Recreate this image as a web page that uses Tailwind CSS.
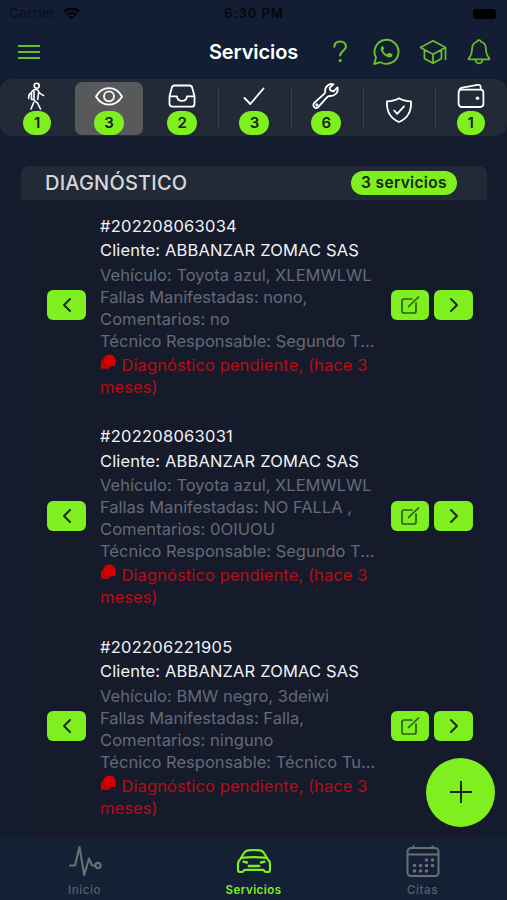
<!DOCTYPE html>
<html lang="es">
<head>
<meta charset="utf-8">
<title>Servicios</title>
<script src="https://cdn.jsdelivr.net/npm/@tailwindcss/browser@4"></script>
</head>
<body class="w-[507px] h-[900px] overflow-hidden bg-[#131c2c] font-[Inter,sans-serif]">
<div class="relative flex flex-col w-[507px] h-[900px] overflow-hidden">
  <header class="h-[79px] shrink-0 bg-[#131d33]">
    <div class="relative h-[27px] flex items-center justify-between pl-[9px] pr-[11px] text-[13px] text-[#04070e]">
      <div class="flex items-center gap-[7px] text-[#080d18]"><span class="tracking-[0.600px]">Carrier</span>
        <svg class="w-[17px] h-[13px]" viewBox="0 0 18 13" fill="none" stroke="#02040a" stroke-width="2.6"><path d="M1 4.800C5.500.500 12.500.500 17 4.800M4 8c3-2.700 7-2.700 10 0"/><path d="M9 12.500 6.200 9.800c1.600-1.400 4-1.400 5.600 0z" fill="#02040a" stroke="none"/></svg>
      </div>
      <span class="absolute left-0 w-full text-center font-semibold tracking-[0.900px] pl-[1px]">6:30 PM</span>
      <span class="w-[23px] h-[10px] rounded-[3px] bg-black"></span>
    </div>
    <div class="relative h-[50px] flex items-center justify-between pl-[18px] pr-[14px] text-[#6abf2e]">
      <svg class="w-[22px] h-[14px]" viewBox="0 0 22 14" stroke="currentColor" stroke-width="1.800"><path d="M0 1h22M0 7h22M0 13h22"/></svg>
      <h1 class="absolute left-0 w-full text-center text-white text-[20px] font-semibold tracking-[-0.100px]">Servicios</h1>
      <div class="flex items-center gap-[18.500px]">
        <svg class="w-[28px] h-[28px]" viewBox="0 0 28 28" fill="none" stroke="currentColor" stroke-width="2.100" stroke-linecap="round"><path d="M8.300 8.800C8.500 5.200 11 3.500 14.200 3.500c3.400 0 5.700 2 5.700 4.900 0 4.400-5.700 4.500-5.700 9.100"/><circle cx="14.200" cy="22.600" r="1.600" fill="currentColor" stroke="none"/></svg>
        <svg class="w-[28px] h-[28px]" viewBox="0 0 28 28" fill="none" stroke="currentColor" stroke-width="1.900" stroke-linejoin="round"><path d="M2.200 26 4 19.600A12 12 0 1 1 8.500 24.200z"/><path d="M9.900 8.500c-1.500 1-1.600 2.700-.7 4.600 1.500 3.100 3.900 5.400 7 6.200 2 .5 3.700-.3 4.200-2.100.1-.6 0-.9-.5-1.200l-2.400-1.200c-.5-.2-.8-.1-1.100.3l-1 1.200c-2-.7-3.500-2-4.400-3.900l.9-1.300c.2-.3.2-.6.100-.9l-1-2.200c-.2-.4-.8-.3-1.100.5z" fill="currentColor" stroke="none"/></svg>
        <svg class="w-[28px] h-[28px]" viewBox="0 0 28 28" fill="none" stroke="currentColor" stroke-width="1.700" stroke-linejoin="round" stroke-linecap="round"><path d="M1.500 9.500 14 2.800l12.500 6.700L14 16.200zM5.400 12v8.400L14 25.200l8.500-4.800V12M14 16.200v8.500M26.500 9.800v11.500"/></svg>
        <svg class="w-[28px] h-[28px]" viewBox="0 0 28 28" fill="none" stroke="currentColor" stroke-width="1.700" stroke-linejoin="round" stroke-linecap="round"><path d="M14 2.200c-1.100 0-1.800.7-2 1.600-3.300.9-4.800 3.500-4.900 7-.1 4.200-.6 6.600-3.400 9.400-.5.600-.2 1.200.5 1.200h19.600c.7 0 1-.6.5-1.200-2.800-2.800-3.300-5.200-3.400-9.400-.1-3.500-1.600-6.100-4.900-7-.2-.9-.9-1.600-2-1.600z"/><path d="M10.500 22c.2 2.100 1.700 3.300 3.500 3.300s3.300-1.200 3.500-3.300"/></svg>
      </div>
    </div>
  </header>

  <nav class="h-[57px] shrink-0 rounded-[12px] bg-[#222a38] grid grid-cols-7 text-white">
    <div class="flex flex-col items-center pt-[3px] pl-[2px]">
      <svg class="w-[28px] h-[28px]" viewBox="0 0 28 28" fill="none" stroke="currentColor" stroke-width="1.600" stroke-linecap="round" stroke-linejoin="round"><circle cx="13.700" cy="3.700" r="2.500"/><path d="M13 7.500c-2.600 0-4 1.300-5 3.500-2 .6-2.500 2-2.300 5.500M13 7.500c1.500 0 2.300.8 2.800 2.300.7 1.700 2.200 2.800 4.700 3.600M11 9.500v8.500l3.600 3.200L17.500 27M15.500 11l-.7 6.500M8.500 11v6.500H11M10.800 20.300 8 27"/></svg>
      <b class="mt-[1px] w-[28px] h-[24px] rounded-full bg-[#80ef20] text-[#14200f] text-[15px] leading-[24px] font-semibold text-center">1</b>
    </div>
    <div class="my-[3px] ml-[3px] mr-[2px] rounded-[7px] bg-[#58595a] flex flex-col items-center">
      <svg class="w-[28px] h-[28px]" viewBox="0 0 28 28" fill="none" stroke="currentColor" stroke-width="1.800"><path d="M1 14.500C7 3.300 21 3.300 27 14.500 21 25.300 7 25.300 1 14.500z" stroke-linejoin="round"/><circle cx="14" cy="14.300" r="5"/></svg>
      <b class="w-[30px] h-[24px] mt-[1px] rounded-full bg-[#80ef20] text-[#14200f] text-[15px] leading-[24px] font-semibold text-center">3</b>
    </div>
    <div class="relative flex flex-col items-center pt-[3px] pl-[2px]">
      <svg class="w-[28px] h-[28px]" viewBox="0 0 28 28" fill="none" stroke="currentColor" stroke-width="1.800" stroke-linejoin="round"><path d="M6.500 3.500h15c1.600 0 2.300.7 2.700 2.200l2.300 8.500v7.500c0 2-1 3-3 3h-19c-2 0-3-1-3-3v-7.500l2.300-8.500c.4-1.500 1.100-2.200 2.700-2.200z"/><path d="M1.500 14.300H9c.3 3 2 4.600 5 4.600s4.700-1.600 5-4.600h7.500"/></svg>
      <b class="w-[30px] h-[24px] mt-[1px] rounded-full bg-[#80ef20] text-[#14200f] text-[15px] leading-[24px] font-semibold text-center">2</b>
    </div>
    <div class="flex flex-col items-center pt-[3px] pl-[2px] relative before:absolute before:left-[1px] before:top-[9px] before:h-[40px] before:w-px before:bg-[#3a414d]">
      <svg class="w-[28px] h-[28px]" viewBox="0 0 28 28" fill="none" stroke="currentColor" stroke-width="1.800" stroke-linecap="round" stroke-linejoin="round"><path d="m4.500 16 5.800 6L23.500 6.500"/></svg>
      <b class="w-[30px] h-[24px] mt-[1px] rounded-full bg-[#80ef20] text-[#14200f] text-[15px] leading-[24px] font-semibold text-center">3</b>
    </div>
    <div class="flex flex-col items-center pt-[3px] pl-[1px] relative before:absolute before:left-[1px] before:top-[9px] before:h-[40px] before:w-px before:bg-[#3a414d]">
      <svg class="w-[28px] h-[28px]" viewBox="0 0 28 28" fill="none" stroke="currentColor" stroke-width="1.800" stroke-linejoin="round"><path d="M21.500 2.300c-3-1-8.800 1-8.300 6.800.1 1.300-.2 2-1.300 3L2.200 21c-2.300 2.800 1 6.600 4 4.200l8.700-9.900c1-1.100 1.700-1.400 3.200-1.300 5.300.2 8.600-4.100 7.400-8.600l-4 3.900-3.200-1-.7-2.500z"/><circle cx="4.900" cy="22.800" r=".7"/></svg>
      <b class="w-[30px] h-[24px] mt-[1px] rounded-full bg-[#80ef20] text-[#14200f] text-[15px] leading-[24px] font-semibold text-center">6</b>
    </div>
    <div class="flex flex-col items-center justify-center pt-[2px] pl-[1px] relative before:absolute before:left-[1px] before:top-[9px] before:h-[40px] before:w-px before:bg-[#3a414d]">
      <svg class="w-[28px] h-[28px]" viewBox="0 0 28 28" fill="none" stroke="currentColor" stroke-width="1.800" stroke-linecap="round" stroke-linejoin="round"><path d="M14 2.200c-3.600 2.400-7.500 3-12 3.200-.6 9.500 3.500 17 12 20.600 8.500-3.600 12.600-11.100 12-20.600-4.500-.2-8.400-.8-12-3.200z"/><path d="m9.200 14.500 3 3.300 6.800-7.500"/></svg>
    </div>
    <div class="flex flex-col items-center pt-[3px] relative before:absolute before:left-0 before:top-[9px] before:h-[40px] before:w-px before:bg-[#3a414d]">
      <svg class="w-[28px] h-[28px]" viewBox="0 0 28 28" fill="none" stroke="currentColor" stroke-width="1.800" stroke-linejoin="round"><rect x="1.600" y="7.600" width="24.800" height="17.400" rx="3.200"/><path d="M2 9.500C2.200 6.700 3.300 6 5.500 5.600l15-2.700c2.200-.4 3.200.6 3.200 2.500v2"/><circle cx="20.500" cy="16.300" r="1.800" fill="currentColor" stroke="none"/></svg>
      <b class="w-[28px] h-[24px] mt-[1px] rounded-full bg-[#80ef20] text-[#14200f] text-[15px] leading-[24px] font-semibold text-center">1</b>
    </div>
  </nav>

  <main class="mt-[30px] ml-[21px] w-[466px] flex-1 min-h-0 overflow-hidden rounded-t-[8px] bg-[#151b2b]">
    <div class="h-[34px] bg-[#212a36] flex items-center justify-between pl-[24px] pr-[30px]">
      <h2 class="text-[20px] font-medium text-[#d6d7da] tracking-[0.200px]">DIAGNÓSTICO</h2>
      <span class="w-[106px] h-[24px] rounded-full bg-[#80ef20] text-[#14280f] text-[15.500px] leading-[24px] font-semibold text-center tracking-[0.350px]">3 servicios</span>
    </div>
    <div id="list"></div>
  </main>

  <footer class="h-[63px] shrink-0 bg-[#142033] border-t border-[#172032] grid grid-cols-3 text-[11.500px] text-[#5b616b]">
    <div class="flex flex-col items-center pt-[6px]">
      <svg class="w-[34px] h-[34px]" viewBox="0 0 34 34" fill="none" stroke="#6b6f72" stroke-width="2.100" stroke-linecap="round" stroke-linejoin="round"><path d="M2 21.500h5L11.500 3l4.700 28L21 14.500l3 7h3"/><circle cx="30" cy="21.500" r="2.600"/></svg>
      <span class="leading-[16px] mt-[4px] font-medium tracking-[0.600px]">Inicio</span>
    </div>
    <div class="flex flex-col items-center pt-[6px] text-[#80ef20]">
      <svg class="w-[36px] h-[34px]" viewBox="0 0 36 34" fill="none" stroke="currentColor" stroke-width="2.200" stroke-linejoin="round" stroke-linecap="round"><path d="M4.500 14.800 8 9c1-1.700 2-2.500 4-2.700 4-.4 8-.4 12 0 2 .2 3 1 4 2.700l3.500 5.800c1.700 1.400 2.500 3.200 2.500 5.500V26c0 1.300-.7 2-2 2h-1.500c-1.200 0-1.800-.5-2.200-1.300-.3-.6-.7-.9-1.300-.9H9c-.6 0-1 .3-1.300.9-.4.800-1 1.300-2.200 1.300H4c-1.300 0-2-.7-2-2v-5.700c0-2.300.8-4.100 2.500-5.500zM5.500 13.800c8.300-.8 16.700-.8 25 0"/><path d="m7.500 17.700 3.500.8M28.500 17.700l-3.500.8M12.800 22h10.400" stroke-width="2.400"/></svg>
      <span class="leading-[16px] mt-[4px] font-semibold tracking-[0.450px]">Servicios</span>
    </div>
    <div class="flex flex-col items-center pt-[6px]">
      <svg class="w-[34px] h-[34px]" viewBox="0 0 34 34" fill="none" stroke="#6b6f72" stroke-width="2"><rect x="1.500" y="4" width="31" height="28" rx="3.500"/><path d="M2 10.500h30M7.500 1.500V4M26.500 1.500V4"/><path d="M20.500 16h.01M26.500 16h.01M8.500 21.500h.01M14.500 21.500h.01M20.500 21.500h.01M26.500 21.500h.01M8.500 27h.01M14.500 27h.01M20.500 27h.01" stroke-width="3.600" stroke-linecap="round"/></svg>
      <span class="leading-[16px] mt-[4px] font-medium tracking-[0.600px]">Citas</span>
    </div>
  </footer>

  <button class="absolute left-[426px] top-[758px] w-[69px] h-[69px] rounded-full bg-[#80ef20] flex items-center justify-center">
    <svg class="w-[22px] h-[22px] -mt-[1px]" viewBox="0 0 22 22" stroke="#14280f" stroke-width="1.900"><path d="M11 0v22M0 11h22"/></svg>
  </button>
</div>

<script>
const services = [
  ['#202208063034', 'Toyota azul, XLEMWLWL', 'nono,', 'no', 'Segundo T...'],
  ['#202208063031', 'Toyota azul, XLEMWLWL', 'NO FALLA ,', '0OIUOU', 'Segundo T...'],
  ['#202206221905', 'BMW negro, 3deiwi', 'Falla,', 'ninguno', 'Técnico Tu...'],
];
document.getElementById('list').innerHTML = services.map(([id, car, fault, note, tech]) => `
  <article class="h-[210.500px] flex items-center pl-[26px] pr-[14px]">
    <button class="w-[39px] h-[30px] shrink-0 rounded-[6px] bg-[#80ef20] flex items-center justify-center">
      <svg class="w-[8px] h-[14px]" viewBox="0 0 8 14" fill="none" stroke="#14280f" stroke-width="1.900" stroke-linecap="round" stroke-linejoin="round"><path d="M7 1 1 7l6 6"/></svg>
    </button>
    <div class="w-[292px] ml-[14px] pt-[2px] whitespace-nowrap text-[16.500px] leading-[22px] text-[#646a76]">
      <p class="relative -top-[1px] leading-[24.500px] text-[#f1f2f4] tracking-[0.250px]">${id}</p>
      <p class="relative -top-[1px] leading-[24.500px] text-[#f1f2f4] tracking-[0.150px]">Cliente: ABBANZAR ZOMAC SAS</p>
      <p>Vehículo: ${car}</p>
      <p>Fallas Manifestadas: ${fault}</p>
      <p class="tracking-[0.080px]">Comentarios: ${note}</p>
      <p>Técnico Responsable: ${tech}</p>
      <p class="mt-[2px] text-[#b90b16] tracking-[0.100px]"><svg class="inline-block align-[1px] w-[16px] h-[16px] mr-[5.500px]" viewBox="0 0 16 16" fill="#d40000"><path d="M9.500.5a6.200 6.200 0 0 1 5.600 9l.4 2.800-2.700-.5A6.200 6.200 0 1 1 9.500.5z"/><path d="M2.600 5.500c-2 2-2 4.300-1.200 6L.6 15l3.200-.7c2.500 1.200 5 .8 6.700-.8C6 13.500 2.500 10.500 2.600 5.500z"/></svg>Diagnóstico pendiente, (hace 3<br>meses)</p>
    </div>
    <button class="w-[38px] h-[30px] shrink-0 rounded-[6px] bg-[#80ef20] flex items-center justify-center">
      <svg class="w-[20px] h-[20px]" viewBox="0 0 20 20" fill="none" stroke="#286015" stroke-width="1.700" stroke-linecap="round" stroke-linejoin="round"><path d="M12 4H4a2 2 0 0 0-2 2v10a2 2 0 0 0 2 2h10a2 2 0 0 0 2-2V8M8.500 11.500 18.500 2"/></svg>
    </button>
    <button class="w-[39px] h-[30px] ml-[5px] shrink-0 rounded-[6px] bg-[#80ef20] flex items-center justify-center">
      <svg class="w-[8px] h-[14px]" viewBox="0 0 8 14" fill="none" stroke="#14280f" stroke-width="1.900" stroke-linecap="round" stroke-linejoin="round"><path d="m1 1 6 6-6 6"/></svg>
    </button>
  </article>`).join('');
</script>
</body>
</html>
